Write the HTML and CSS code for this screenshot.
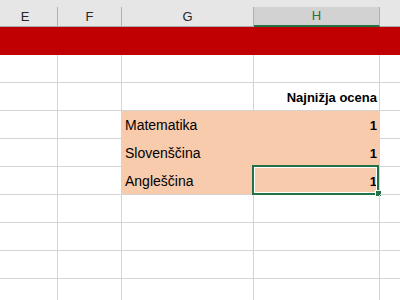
FILE: index.html
```html
<!DOCTYPE html>
<html lang="sl">
<head>
    <meta charset="UTF-8">
    <meta name="viewport" content="width=device-width, initial-scale=1.0">
    <title>Ocene</title>
    <link rel="stylesheet" href="styles.css">
</head>
<body>
    <div class="sheet">
        <div class="hdr">
            <div class="col">E</div>
            <div class="col">F</div>
            <div class="col">G</div>
            <div class="col active">H</div>
            <div class="col"></div>
        </div>

        <div class="row band">
            <div class="cell"></div><div class="cell"></div><div class="cell"></div><div class="cell"></div><div class="cell"></div>
        </div>
        <div class="row">
            <div class="cell"></div><div class="cell"></div><div class="cell"></div><div class="cell"></div><div class="cell"></div>
        </div>
        <div class="row">
            <div class="cell"></div><div class="cell"></div><div class="cell"></div>
            <div class="cell num bold">Najnižja ocena</div>
            <div class="cell"></div>
        </div>
        <div class="row">
            <div class="cell"></div><div class="cell"></div>
            <div class="cell fill mid">Matematika</div>
            <div class="cell fill mid num bold">1</div>
            <div class="cell"></div>
        </div>
        <div class="row">
            <div class="cell"></div><div class="cell"></div>
            <div class="cell fill mid">Slovenščina</div>
            <div class="cell fill mid num bold">1</div>
            <div class="cell"></div>
        </div>
        <div class="row">
            <div class="cell"></div><div class="cell"></div>
            <div class="cell fill">Angleščina</div>
            <div class="cell fill num bold selected">1<span class="box"><span class="handle"></span></span></div>
            <div class="cell"></div>
        </div>
        <div class="row">
            <div class="cell"></div><div class="cell"></div><div class="cell"></div><div class="cell"></div><div class="cell"></div>
        </div>
        <div class="row">
            <div class="cell"></div><div class="cell"></div><div class="cell"></div><div class="cell"></div><div class="cell"></div>
        </div>
        <div class="row">
            <div class="cell"></div><div class="cell"></div><div class="cell"></div><div class="cell"></div><div class="cell"></div>
        </div>
        <div class="row">
            <div class="cell"></div><div class="cell"></div><div class="cell"></div><div class="cell"></div><div class="cell"></div>
        </div>
    </div>
</body>
</html>
```

FILE: styles.css
```css
body {
    margin: 0;
    background: #fff;
    overflow: hidden;
    font-family: "Liberation Sans", Arial, sans-serif;
    color: #000;
}

.sheet {
    margin-left: -7px;
    width: 420px;
}

.hdr,
.row {
    display: grid;
    grid-template-columns: 65px 64px 132px 126px 1fr;
}

.hdr {
    background: #e6e6e6;
    padding-top: 7px;
}

.hdr .col {
    box-sizing: border-box;
    height: 20px;
    border-right: 1px solid #b1b1b1;
    border-bottom: 1px solid #ababab;
    text-align: center;
    font-size: 13px;
    line-height: 19px;
    color: #262626;
}

.hdr .col.active {
    background: #d2d2d2;
    color: #217346;
    border-bottom: 2px solid #217346;
    line-height: 18px;
}

.row .cell {
    box-sizing: border-box;
    height: 28px;
    border-right: 1px solid #d4d4d4;
    border-bottom: 1px solid #d4d4d4;
    font-size: 14px;
    line-height: 27px;
    padding: 1px 2px 0 3px;
    white-space: nowrap;
    position: relative;
}

.row.band .cell {
    background: #c00000;
    border-color: #c00000;
}

.cell.num {
    text-align: right;
}

.cell.bold {
    font-weight: bold;
    font-size: 13px;
}

.cell.fill {
    background: #f8cbad;
    border-right-color: #f8cbad;
}

.cell.fill.mid {
    border-bottom-color: #f8cbad;
}

.selected .box {
    position: absolute;
    top: -2px;
    left: -2px;
    right: 0;
    bottom: -1px;
    border: 2px solid #217346;
    box-shadow: inset 0 0 0 1px #fff;
}

.selected .handle {
    position: absolute;
    right: -4px;
    bottom: -3px;
    width: 5px;
    height: 5px;
    background: #217346;
    box-shadow: 0 0 0 1px #fff;
}
```
